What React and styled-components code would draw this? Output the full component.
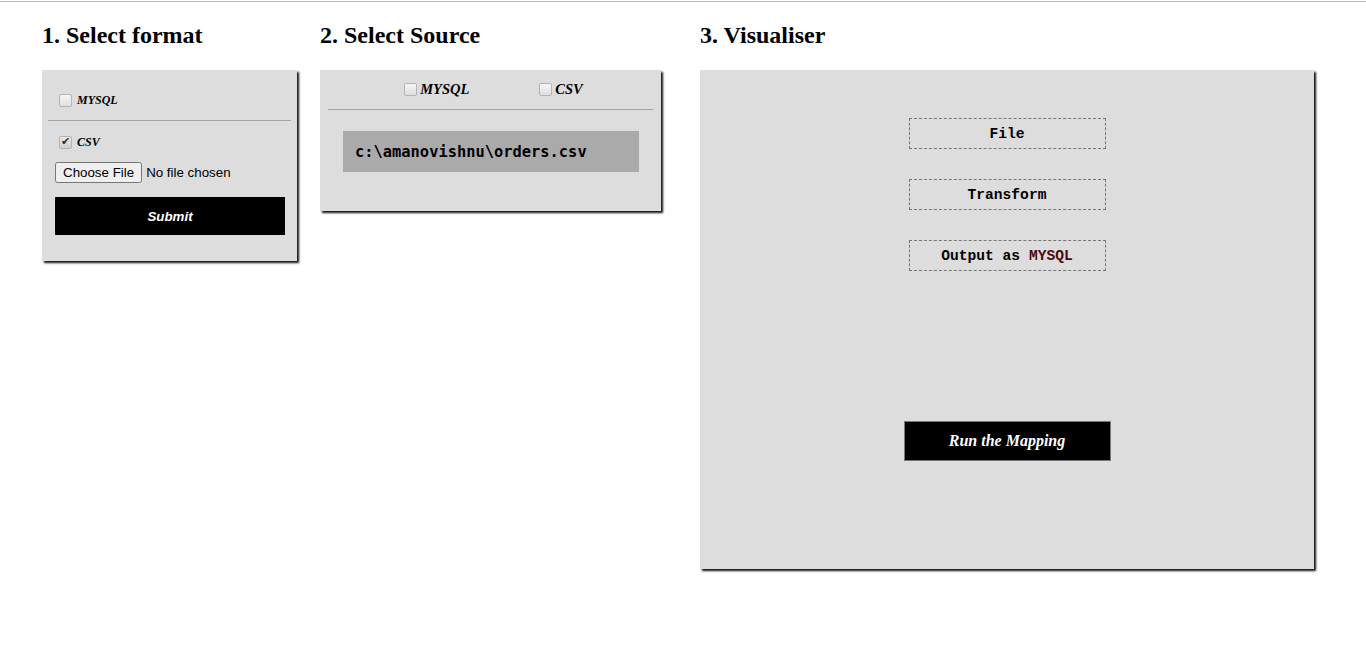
import React from "react";
import styled, { createGlobalStyle } from "styled-components";

const GlobalStyle = createGlobalStyle`
  html, body {
    margin: 0;
    padding: 0;
    background: #fff;
    font-family: "Liberation Serif", "Times New Roman", serif;
    color: #000;
  }
`;

const TopRule = styled.div`
  margin-top: 1px;
  height: 1px;
  background: #bdbdbd;
`;

const Page = styled.div`
  display: flex;
  align-items: flex-start;
  padding: 0 0 80px 42px;
`;

const Column = styled.section`
  width: ${(p) => p.$width}px;
  flex: none;
`;

const Heading = styled.h2`
  margin: 20px 0 21px;
  font-size: 24px;
  font-weight: bold;
  line-height: 27px;
`;

const Panel = styled.div`
  background: #dddddd;
  width: ${(p) => p.$width}px;
  height: ${(p) => p.$height}px;
  box-sizing: border-box;
  box-shadow: 2px 2px 2px #111;
`;

const FormatPanel = styled(Panel)`
  padding: 21px 0 0;
`;

const Field = styled.div`
  padding: 0 13px;
  display: flex;
  flex-direction: column;
  align-items: flex-start;
`;

const Check = styled.input.attrs({ type: "checkbox" })`
  appearance: none;
  width: 13px;
  height: 13px;
  margin: 3px ${(p) => p.$gap ?? 5}px 3px 4px;
  box-sizing: border-box;
  border: 1px solid #b4b4b4;
  border-radius: 2px;
  background: linear-gradient(#f6f6f6, #dedede);
  position: relative;
  flex: none;

  &:checked {
    background: linear-gradient(#e8e8e8, #cfcfcf);
  }

  &:checked::after {
    content: "✔";
    position: absolute;
    left: 1px;
    top: -2px;
    font-family: "DejaVu Sans", sans-serif;
    font-style: normal;
    font-size: 11px;
    color: #333;
  }
`;

const Label = styled.label`
  display: inline-flex;
  align-items: center;
  font-style: italic;
  font-weight: bold;
  font-size: ${(p) => p.$size || 12}px;
`;

const Rule = styled.hr`
  border: none;
  border-top: 1px solid #a3a3a3;
  margin: ${(p) => p.$margin};
`;

const FileInput = styled.input`
  font-family: "Liberation Sans", Arial, sans-serif;
  font-size: 13.33px;
  margin-top: 10px;
`;

const BlackButton = styled.button`
  display: block;
  background: #000;
  color: #fff;
  border: ${(p) => (p.$bordered ? "1px solid #777" : "none")};
  font-weight: bold;
  font-style: italic;
  cursor: pointer;
`;

const SubmitButton = styled(BlackButton)`
  width: 230px;
  height: 38px;
  margin-top: 14px;
  font-family: "Liberation Sans", Arial, sans-serif;
  font-size: 13.33px;
`;

const SourcePanel = styled(Panel)`
  padding-top: 10px;
`;

const SourceChoices = styled.div`
  display: flex;
  justify-content: center;
  gap: 66px;
  padding-left: 2px;
`;

const PathBox = styled.div`
  margin: 21px 22px 0 23px;
  height: 41px;
  background: #aaaaaa;
  display: flex;
  align-items: center;
  padding-left: 12px;
  font-family: "DejaVu Sans Mono", "Liberation Mono", monospace;
  font-weight: bold;
  font-size: 15.4px;
`;

const VisualPanel = styled(Panel)`
  display: flex;
  flex-direction: column;
  align-items: center;
  padding-top: 48px;
`;

const Step = styled.div`
  width: 197px;
  height: 31px;
  box-sizing: border-box;
  border: 1px dashed #777;
  display: flex;
  align-items: center;
  justify-content: center;
  margin-bottom: 30px;
  font-family: "Liberation Mono", "DejaVu Sans Mono", monospace;
  font-weight: bold;
  font-size: 14.6px;
`;

const Target = styled.span`
  color: #4a0a0a;
`;

const RunButton = styled(BlackButton)`
  width: 207px;
  height: 40px;
  margin-top: 120px;
  font-family: "Liberation Serif", "Times New Roman", serif;
  font-size: 16px;
`;

export default function App() {
  return (
    <>
      <GlobalStyle />
      <TopRule />
      <Page>
        <Column $width={278}>
          <Heading>1. Select format</Heading>
          <FormatPanel $width={255} $height={191}>
            <Field>
              <Label>
                <Check />
                MYSQL
              </Label>
            </Field>
            <Rule $margin="10px 6px 12px" />
            <Field>
              <Label>
                <Check defaultChecked />
                CSV
              </Label>
              <FileInput type="file" />
              <SubmitButton>Submit</SubmitButton>
            </Field>
          </FormatPanel>
        </Column>

        <Column $width={380}>
          <Heading>2. Select Source</Heading>
          <SourcePanel $width={341} $height={141}>
            <SourceChoices>
              <Label $size={14.5}>
                <Check $gap={3} />
                MYSQL
              </Label>
              <Label $size={14.5}>
                <Check $gap={3} />
                CSV
              </Label>
            </SourceChoices>
            <Rule $margin="10px 8px 0" />
            <PathBox>c:\amanovishnu\orders.csv</PathBox>
          </SourcePanel>
        </Column>

        <Column $width={620}>
          <Heading>3. Visualiser</Heading>
          <VisualPanel $width={614} $height={499}>
            <Step>File</Step>
            <Step>Transform</Step>
            <Step>
              Output as&nbsp;<Target>MYSQL</Target>
            </Step>
            <RunButton $bordered>Run the Mapping</RunButton>
          </VisualPanel>
        </Column>
      </Page>
    </>
  );
}
